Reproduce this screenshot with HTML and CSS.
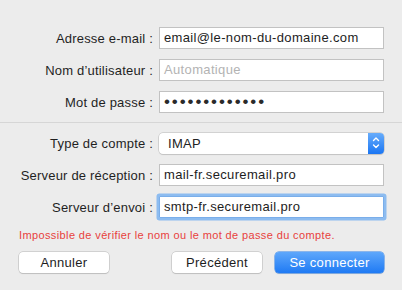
FILE: index.html
```html
<!DOCTYPE html>
<html lang="fr">
<head>
<meta charset="utf-8">
<link rel="stylesheet" href="styles.css">
</head>
<body>
<div class="sheet">
  <div class="form">
    <label class="lbl">Adresse e-mail :</label>
    <div class="field">email@le-nom-du-domaine.com</div>
    <label class="lbl">Nom d’utilisateur :</label>
    <div class="field placeholder">Automatique</div>
    <label class="lbl">Mot de passe :</label>
    <div class="field"><span class="dots">•••••••••••••</span></div>
  </div>
  <div class="sep"></div>
  <div class="form form2">
    <label class="lbl">Type de compte :</label>
    <div class="select">
      <span class="sel-text">IMAP</span>
      <span class="sel-btn">
        <svg width="16" height="21" viewBox="0 0 16 21"><path d="M5.5 7.5 L8 5 L10.5 7.5 M5.5 12 L8 14.5 L10.5 12" fill="none" stroke="#fff" stroke-width="1.4" stroke-linecap="round" stroke-linejoin="round"/></svg>
      </span>
    </div>
    <label class="lbl">Serveur de réception :</label>
    <div class="field">mail-fr.securemail.pro</div>
    <label class="lbl">Serveur d’envoi :</label>
    <div class="field focus">smtp-fr.securemail.pro</div>
  </div>
  <p class="error">Impossible de vérifier le nom ou le mot de passe du compte.</p>
  <div class="buttons">
    <button class="btn">Annuler</button>
    <div class="right">
      <button class="btn">Précédent</button>
      <button class="btn primary">Se connecter</button>
    </div>
  </div>
</div>
</body>
</html>
```

FILE: styles.css
```css
html, body {
  margin: 0;
  padding: 0;
  background: #ececec;
}
body {
  width: 402px;
  height: 290px;
  overflow: hidden;
  font-family: "Liberation Sans", Arial, sans-serif;
  font-size: 13px;
  color: #222;
}
.sheet {
  padding-top: 27px;
}
.form {
  display: grid;
  grid-template-columns: 153px 225px;
  column-gap: 6px;
  row-gap: 10px;
  grid-auto-rows: 22px;
}
.form2 {
  grid-template-rows: 21px 22px 22px;
}
.lbl {
  text-align: right;
  align-self: center;
  white-space: nowrap;
  color: #1f1f1f;
  letter-spacing: 0.2px;
}
.field {
  box-sizing: border-box;
  height: 22px;
  background: #fff;
  border: 1px solid #c2c2c2;
  padding: 0 4px;
  line-height: 20px;
  white-space: nowrap;
  overflow: hidden;
  color: #1d1d1d;
  letter-spacing: 0.35px;
}
.placeholder {
  color: #b3b3b3;
}
.dots {
  font-size: 17px;
  letter-spacing: 1.9px;
  line-height: 20px;
  color: #2a2a2a;
}
.focus {
  border-color: #7aaeea;
  box-shadow: 0 0 0 2.5px #8dbcf0;
  border-radius: 1px;
}
.sep {
  height: 1px;
  background: #d6d6d6;
  margin: 9px 0 10px;
}
.select {
  display: flex;
  box-sizing: border-box;
  height: 21px;
  background: #fff;
  border-radius: 4px;
  box-shadow: 0 0 0 0.5px #b8b8b8, 0 1px 1px rgba(0,0,0,0.12);
  overflow: hidden;
}
.sel-text {
  flex: 1;
  padding-left: 9px;
  line-height: 21px;
  color: #222;
  letter-spacing: 0.3px;
}
.sel-btn {
  width: 16px;
  height: 21px;
  background: linear-gradient(#67acfb, #1b76f3);
  display: flex;
}
.error {
  margin: 10px 0 0 19px;
  font-size: 11px;
  line-height: 14px;
  letter-spacing: 0.38px;
  color: #e8413c;
}
.buttons {
  display: flex;
  justify-content: space-between;
  padding: 10px 18px 0 19px;
}
.right {
  display: flex;
  gap: 13px;
}
.btn {
  box-sizing: border-box;
  width: 90px;
  height: 21px;
  margin: 0;
  padding: 0;
  font-family: "Liberation Sans", Arial, sans-serif;
  font-size: 13px;
  letter-spacing: 0.3px;
  color: #1d1d1d;
  background: #fff;
  border: none;
  border-radius: 4px;
  box-shadow: 0 0 0 0.5px #b5b5b5, 0 1px 1px rgba(0,0,0,0.15);
}
.primary {
  width: 109px;
  color: #fff;
  background: linear-gradient(#5ea7fb, #1f7af4);
  box-shadow: 0 0 0 0.5px #2a7ee8, 0 1px 1px rgba(0,0,0,0.12);
}
```
